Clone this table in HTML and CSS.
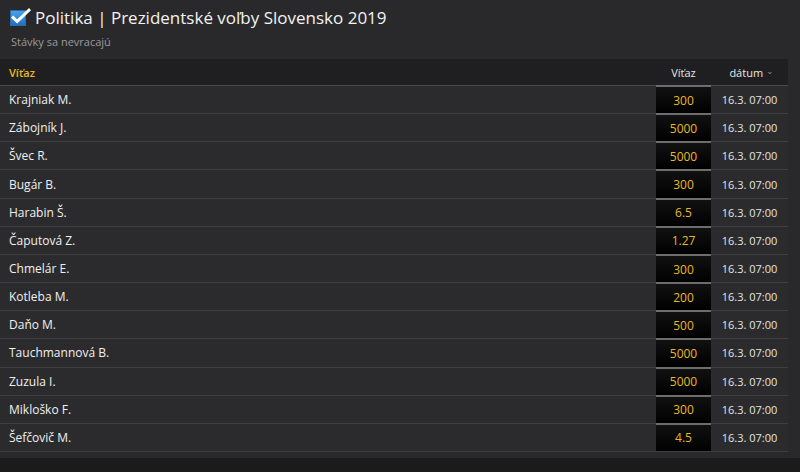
FILE: index.html
```html
<!DOCTYPE html>
<html lang="sk">
<head>
<meta charset="utf-8">
<title>Politika | Prezidentské voľby Slovensko 2019</title>
<link rel="stylesheet" href="styles.css">
</head>
<body>
<div class="panel">
  <header class="head">
    <h1 class="title">
      <svg class="check" width="21" height="18" viewBox="0 0 21 18" aria-hidden="true">
        <defs>
          <linearGradient id="bl" x1="0" y1="0" x2="0" y2="1">
            <stop offset="0" stop-color="#4aa3ea"/>
            <stop offset="1" stop-color="#1f6fc0"/>
          </linearGradient>
        </defs>
        <rect x="0.5" y="2.5" width="15" height="15" fill="url(#bl)" stroke="#2a6bb0"/>
        <path d="M3.2 9.6 L7.2 13.4 L19 2.2" fill="none" stroke="#fff" stroke-width="3" stroke-linecap="square" stroke-linejoin="miter"/>
      </svg>
      <span>Politika | Prezidentské voľby Slovensko 2019</span>
    </h1>
    <p class="sub">Stávky sa nevracajú</p>
  </header>
  <div class="table">
    <div class="thead">
      <div class="c-name">Víťaz</div>
      <div class="c-odd">Víťaz</div>
      <div class="c-date">dátum <span class="chev">&#8964;</span></div>
    </div>
    <div class="row"><div class="c-name">Krajniak M.</div><div class="c-odd odd">300</div><div class="c-date">16.3. 07:00</div></div>
    <div class="row"><div class="c-name">Zábojník J.</div><div class="c-odd odd">5000</div><div class="c-date">16.3. 07:00</div></div>
    <div class="row"><div class="c-name">Švec R.</div><div class="c-odd odd">5000</div><div class="c-date">16.3. 07:00</div></div>
    <div class="row"><div class="c-name">Bugár B.</div><div class="c-odd odd">300</div><div class="c-date">16.3. 07:00</div></div>
    <div class="row"><div class="c-name">Harabin Š.</div><div class="c-odd odd">6.5</div><div class="c-date">16.3. 07:00</div></div>
    <div class="row"><div class="c-name">Čaputová Z.</div><div class="c-odd odd">1.27</div><div class="c-date">16.3. 07:00</div></div>
    <div class="row"><div class="c-name">Chmelár E.</div><div class="c-odd odd">300</div><div class="c-date">16.3. 07:00</div></div>
    <div class="row"><div class="c-name">Kotleba M.</div><div class="c-odd odd">200</div><div class="c-date">16.3. 07:00</div></div>
    <div class="row"><div class="c-name">Daňo M.</div><div class="c-odd odd">500</div><div class="c-date">16.3. 07:00</div></div>
    <div class="row"><div class="c-name">Tauchmannová B.</div><div class="c-odd odd">5000</div><div class="c-date">16.3. 07:00</div></div>
    <div class="row"><div class="c-name">Zuzula I.</div><div class="c-odd odd">5000</div><div class="c-date">16.3. 07:00</div></div>
    <div class="row"><div class="c-name">Mikloško F.</div><div class="c-odd odd">300</div><div class="c-date">16.3. 07:00</div></div>
    <div class="row"><div class="c-name">Šefčovič M.</div><div class="c-odd odd">4.5</div><div class="c-date">16.3. 07:00</div></div>
  </div>
</div>
</body>
</html>
```
FILE: styles.css
```css
html, body {
  margin: 0;
  padding: 0;
}
body {
  width: 800px;
  height: 472px;
  background: #1b1b1c;
  font-family: "Open Sans", "Noto Sans", "DejaVu Sans", sans-serif;
  color: #e6e6e6;
  overflow: hidden;
}
.panel {
  background: #29292b;
  padding-bottom: 6px;
}
.head {
  height: 59px;
  box-sizing: border-box;
  padding: 6px 10px 0 10px;
}
.title {
  margin: 0;
  display: flex;
  align-items: center;
  gap: 4px;
  font-size: 17px;
  font-weight: 400;
  color: #f2f2f2;
  line-height: 24px;
}
.check {
  display: block;
  margin-top: -2px;
}
.sub {
  margin: 5px 0 0 1px;
  font-size: 11px;
  color: #9a9a9a;
  line-height: 14px;
}
.table {
  width: 788px;
}
.thead, .row {
  display: grid;
  grid-template-columns: 656px 55px 77px;
  align-items: stretch;
}
.thead {
  height: 26px;
  background: #1f1f21;
  font-size: 11px;
  border-bottom: 1px solid #4a4a4c;
}
.thead > div {
  display: flex;
  align-items: center;
}
.thead .c-name {
  padding-left: 9px;
  color: #e8b923;
  font-weight: 600;
}
.thead .c-odd {
  justify-content: center;
  color: #e6e6e6;
}
.thead .c-date {
  justify-content: center;
  color: #e6e6e6;
  padding-left: 4px;
  gap: 3px;
}
.chev {
  font-size: 9px;
  color: #8a8a8a;
  margin-top: -4px;
}
.row {
  height: 28.17px;
  box-sizing: border-box;
  background: #2b2b2d;
  border-bottom: 1px solid #3f3f41;
  font-size: 12px;
}
.row > div {
  display: flex;
  align-items: center;
}
.row .c-name {
  padding-left: 9px;
  color: #f0f0f0;
}
.row .c-odd {
  justify-content: center;
  background: linear-gradient(#111112, #000);
  border-top: 2px solid #6d6d6d;
  margin-top: -1px;
  color: #e8b923;
}
.row .c-date {
  justify-content: center;
  font-size: 11px;
  color: #e4e4e4;
}
```
